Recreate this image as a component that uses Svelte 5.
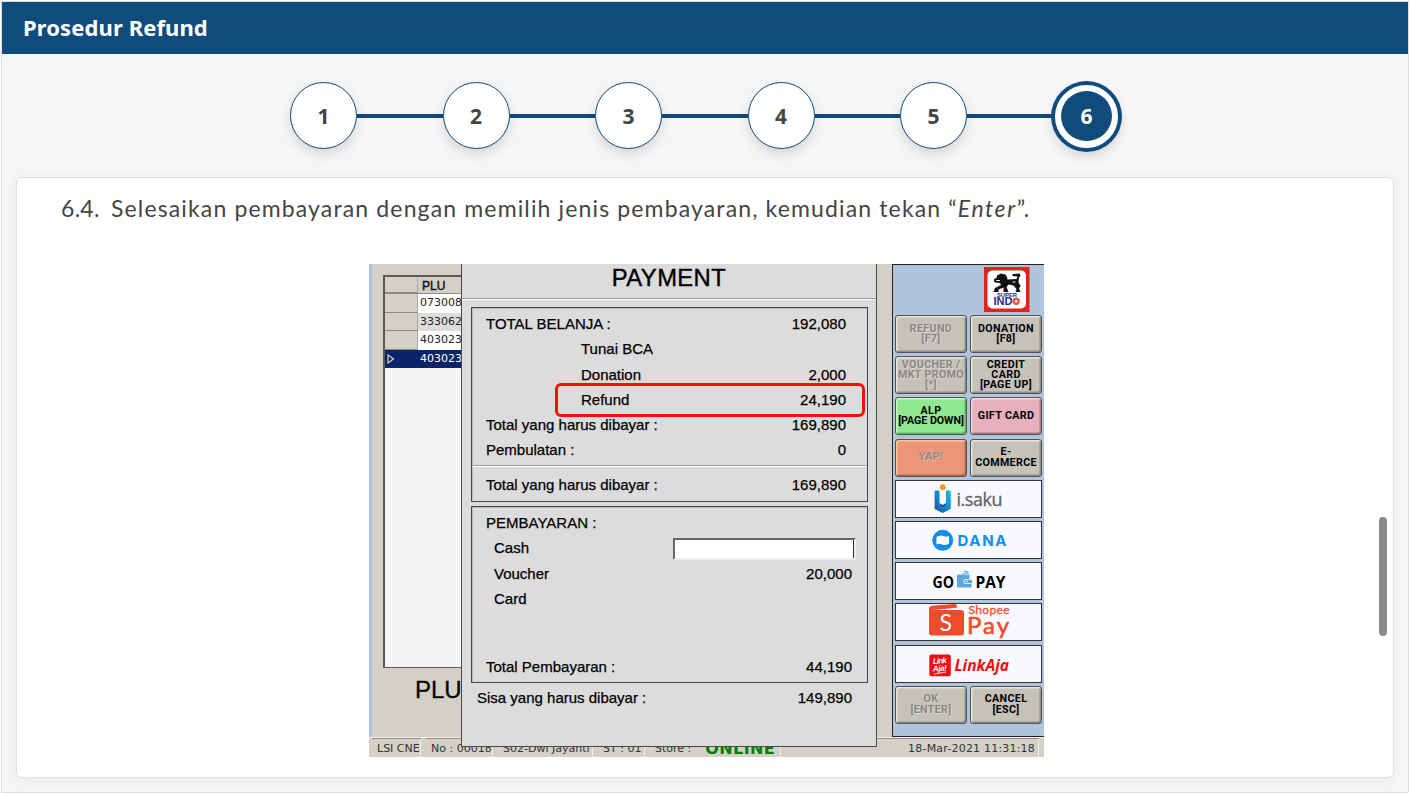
<script>
  const steps = [1, 2, 3, 4, 5, 6];
  const active = 6;

  const plu = ['073008', '333062', '403023', '403023'];

  const totals = [
    { label: 'TOTAL BELANJA :', value: '192,080' },
    { label: 'Tunai BCA', value: '', indent: true },
    { label: 'Donation', value: '2,000', indent: true },
    { label: 'Refund', value: '24,190', indent: true, marked: true },
    { label: 'Total yang harus dibayar :', value: '169,890' },
    { label: 'Pembulatan :', value: '0' }
  ];

  const keys = [
    { lines: ['REFUND', '[F7]'], off: true },
    { lines: ['DONATION', '[F8]'] },
    { lines: ['VOUCHER /', 'MKT PROMO', '[*]'], off: true },
    { lines: ['CREDIT', 'CARD', '[PAGE UP]'] },
    { lines: ['ALP', '[PAGE DOWN]'], tone: 'green' },
    { lines: ['GIFT CARD'], tone: 'pink' },
    { lines: ['YAP!'], tone: 'orange', off: true },
    { lines: ['E-', 'COMMERCE'] }
  ];
  const endKeys = [
    { lines: ['OK', '[ENTER]'], off: true },
    { lines: ['CANCEL', '[ESC]'] }
  ];
</script>

{#snippet key(k)}
  <div class="key {k.tone ?? ''}" class:off={k.off}>
    {#each k.lines as line}<span class:tight={line.length > 10}>{line}</span>{/each}
  </div>
{/snippet}

<div class="page">
  <header>Prosedur Refund</header>

  <nav>
    {#each steps as n}
      {#if n > 1}<i class="link"></i>{/if}
      <div class="step" class:active={n === active}><span>{n}</span></div>
    {/each}
  </nav>

  <main>
    <p><span class="num">6.4.</span><span>Selesaikan pembayaran dengan memilih jenis pembayaran, kemudian tekan “<em>Enter</em>”.</span></p>

    <div class="pos">
      <div class="work">
        <div class="left">
          <div class="grid">
            <div class="row head"><b></b><span>PLU</span></div>
            {#each plu as code, i}
              <div class="row" class:alt={i === 1} class:sel={i === 3}>
                <b>{#if i === 3}<svg width="8" height="10" viewBox="0 0 8 10"><path d="M1 1L6.5 5L1 9Z" fill="#0a246a" stroke="#d8d8b8" stroke-width="1.2" /></svg>{/if}</b>
                <span>{code}</span>
              </div>
            {/each}
          </div>
          <div class="bigplu">PLU</div>
        </div>

        <aside>
          <svg class="brand" width="46" height="45" viewBox="0 0 46 45">
            <rect width="45.500" height="45" fill="#e2231a" />
            <rect x="3.5" y="3.5" width="38.500" height="38" rx="5" fill="#fff" />
            <path d="M10 12L12.500 11L13 8.500L17 6.500L21.500 7.500L23 10L23.500 12.500L32.500 12L33.500 9.500L28.500 9L28.500 7L36 6.500L36.500 9L35 10.500L34.500 15.500L36.500 19L35 21.500L36.500 25H31.500L32.500 22L29.500 18.500L24.500 17.500L22.500 20L24.500 25H19.500L19.500 20.500L14.500 22.500L14.500 25H9.500L11 21L17 18L16 16L11 15.500L10 14Z" fill="#111" />
            <path d="M12 13.500L16 13.500M28.500 15L31.500 15" stroke="#fff" stroke-width=".9" fill="none" />
            <text x="13" y="29.900" textLength="20" lengthAdjust="spacingAndGlyphs" font-size="6.200" font-weight="700" fill="#222a80">SUPER</text>
            <text x="9.500" y="38" textLength="19" lengthAdjust="spacingAndGlyphs" font-size="10.500" font-weight="700" fill="#222a80">IND</text>
            <circle cx="32.200" cy="34.300" r="2.500" fill="#fff" stroke="#e8583a" stroke-width="2.400" />
          </svg>

          <div class="keys">
            {#each keys as k}{@render key(k)}{/each}

            <div class="pay">
              <svg viewBox="0 0 145 36">
                <defs><linearGradient id="saku" x1="0" x2="1" y1="1" y2="0"><stop offset="0" stop-color="#1554a5" /><stop offset=".55" stop-color="#168fd0" /><stop offset="1" stop-color="#15c4d8" /></linearGradient></defs>
                <path d="M38.600 10.500Q38.600 9.500 40 9.500H43.500V25L46.700 27L50 25V9.500H53.500Q54.800 9.500 54.800 10.500V28L46.700 32L38.600 28Z" fill="url(#saku)" />
                <path d="M43.500 25L46.700 27L50 25V22L46.700 24L43.500 22Z" fill="#1554a5" />
                <circle cx="46.800" cy="6.200" r="2.900" fill="#f59a23" />
                <text x="60.500" y="24.500" textLength="46" font-size="18" fill="#626366" stroke="#626366" stroke-width=".3" class="open">i.saku</text>
              </svg>
            </div>
            <div class="pay">
              <svg viewBox="0 0 145 36">
                <circle cx="46.700" cy="18.300" r="10.500" fill="#118ee9" />
                <path d="M40.500 15Q44 12.500 47.500 14T53 14V21.500Q49 24 46 22.500T40.500 22.500Z" fill="#fff" />
                <text x="61.500" y="24" textLength="49" font-size="15" font-weight="700" fill="#118ee9" class="round">DANA</text>
              </svg>
            </div>
            <div class="pay">
              <svg viewBox="0 0 145 36">
                <text x="36.500" y="24.700" textLength="21.500" lengthAdjust="spacingAndGlyphs" font-size="16.500" font-weight="700" class="open">GO</text>
                <path d="M61 12.500Q61 11.500 62.500 11.500H73.500V16H70Q67.500 16 67.500 18.500T70 21H75.500V24.500H62.500Q61 24.500 61 23Z" fill="#5ba7de" />
                <path d="M70 16.700H76V20.300H70Q68.500 20.300 68.500 18.500T70 16.700Z" fill="#5ba7de" />
                <circle cx="71" cy="18.500" r=".8" fill="#fff" />
                <path d="M66.500 10.500L72.500 10M68 8.500Q70.500 7.500 72.500 10" stroke="#5ba7de" stroke-width="1.100" fill="none" />
                <text x="79.500" y="24.700" textLength="30" lengthAdjust="spacingAndGlyphs" font-size="16.500" font-weight="700" class="open">PAY</text>
              </svg>
            </div>
            <div class="pay">
              <svg viewBox="0 0 145 36">
                <path d="M33 4.500Q33 2.300 36 1.700L58 0Q61 -.2 61 2V6H64.500Q68 6 68 9V28.500Q68 31.500 65 31.500H36Q33 31.500 33 28.500Z" fill="#ee4d2d" />
                <path d="M36.500 6L61 3.700V6Z" fill="#f8f8ff" />
                <text x="43.500" y="27" font-size="23" fill="#fff" class="lato">S</text>
                <text x="72.500" y="9.800" textLength="41" font-size="12" fill="#ee4d2d" stroke="#ee4d2d" stroke-width=".3" class="lato">Shopee</text>
                <text x="71" y="29.700" textLength="42" font-size="24" fill="#ee4d2d" stroke="#ee4d2d" stroke-width=".6" class="lato">Pay</text>
              </svg>
            </div>
            <div class="pay">
              <svg viewBox="0 0 145 36">
                <rect x="33.300" y="8.500" width="21.500" height="21.700" rx="2" fill="#f20d12" />
                <text x="37" y="17.500" textLength="14" font-size="8" font-style="italic" font-weight="700" fill="#fff" transform="rotate(-4 44 18)">Link</text>
                <text x="37" y="25" textLength="14" font-size="8" font-style="italic" font-weight="700" fill="#fff" transform="rotate(-4 44 25)">Aja!</text>
                <path d="M38 28.200L50 26" stroke="#fff" stroke-width=".8" />
                <text x="58.500" y="24.500" textLength="54.500" lengthAdjust="spacingAndGlyphs" font-size="15.500" font-style="italic" font-weight="700" fill="#f20d12" class="open">LinkAja</text>
              </svg>
            </div>

            {#each endKeys as k}{@render key(k)}{/each}
          </div>
        </aside>
      </div>

      <footer>
        <span style:width="49px">LSI CNE</span>
        <span style:width="67px">No : 00018</span>
        <span style:width="95px">S02-Dwi Jayanti</span>
        <span style:width="47px">ST : 01</span>
        <span class="store">Store : <b>ONLINE</b></span>
        <span class="clock">18-Mar-2021 11:31:18</span>
      </footer>

      <div class="dialog">
        <h1>PAYMENT</h1>
        <hr />
        <section class="sum">
          {#each totals as t}
            <div class="line" class:indent={t.indent}>
              <span>{t.label}</span><span>{t.value}</span>
              {#if t.marked}<i class="mark"></i>{/if}
            </div>
          {/each}
          <hr />
          <div class="line last"><span>Total yang harus dibayar :</span><span>169,890</span></div>
        </section>
        <section class="paid">
          <div class="line"><span>PEMBAYARAN :</span></div>
          <div class="line sub"><span>Cash</span><i class="field"></i></div>
          <div class="line sub"><span>Voucher</span><span>20,000</span></div>
          <div class="line sub"><span>Card</span></div>
          <div class="line total"><span>Total Pembayaran :</span><span>44,190</span></div>
        </section>
        <div class="line rest"><span>Sisa yang harus dibayar :</span><span>149,890</span></div>
      </div>
    </div>

    <i class="thumb"></i>
  </main>
</div>

<style>
  :global(body) { background: #fff; }
  * { box-sizing: border-box; }
  .page {
    width: 1410px; height: 794px; overflow: hidden;
    border: 1px solid #fff; outline: 1px solid #dcdfe2; outline-offset: -2px;
    padding: 1px; background: #f6f6f6;
    display: flex; flex-direction: column;
  }
  header {
    flex: none; height: 52px; padding-left: 21px; margin: 0;
    background: #104b7d; color: #fff;
    font: 700 22px/50px "Noto Sans", sans-serif; letter-spacing: .1px;
  }
  nav { flex: none; height: 123px; padding: 28px 0 0 288px; display: flex; align-items: flex-start; }
  .step {
    flex: none; width: 67px; height: 67px; border: 1.5px solid #104b7d; border-radius: 50%;
    background: #fff; box-shadow: 0 5px 12px rgba(0, 0, 0, .13);
    display: grid; place-items: center; position: relative;
    font: 700 21px/1 "Noto Sans", sans-serif; color: #444;
  }
  .step span { padding-top: 2px; }
  .link { flex: none; width: 85.500px; height: 4px; margin-top: 32px; background: #104b7d; }
  .step.active { margin: 1px 0 0 .5px; border-width: 2px; box-shadow: 0 0 0 2px #104b7d, 0 6px 12px rgba(0, 0, 0, .15); color: #fff; }
  .step.active span { width: 51px; height: 50px; border-radius: 50%; background: #104b7d; display: grid; place-items: center; margin-top: -2px; }

  main {
    position: relative; width: 1378px; height: 601px; margin-left: 14px; flex: none;
    background: #fff; border: 1px solid #dedfe0; border-radius: 6px;
    box-shadow: 0 2px 14px rgba(0, 0, 0, .06);
  }
  p {
    margin: 0; padding: 14px 0 0 44px; height: 86px; display: flex;
    font: 23px/32px Lato, sans-serif; color: #444; letter-spacing: 1.140px; white-space: nowrap;
  }
  p em { letter-spacing: 1.600px; }
  .num { width: 50px; letter-spacing: .3px; }
  .thumb { position: absolute; left: 1362px; top: 339px; width: 8px; height: 119px; border-radius: 4px; background: #8b8b8b; }

  .pos {
    position: relative; width: 675px; height: 493px; margin-left: 352px; overflow: hidden;
    font-family: "Liberation Sans", sans-serif; color: #000; background: #d4d0c8;
    display: flex; flex-direction: column;
  }
  .work { height: 473px; display: flex; border-left: 3px solid #a9c6e8; }
  .left { width: 520px; padding: 11px 0 0 11px; }
  .grid { width: 300px; height: 393px; border: 2px solid #5c5a58; border-bottom-width: 1px; background: #f5f5f5; }
  .row { display: flex; height: 18.500px; background: #fff; font: 11px/17px "DejaVu Sans", sans-serif; color: #222; }
  .row b { width: 33px; background: #d4d0c8; border-bottom: 1px solid #8c8a86; border-right: 1px solid #aaa; padding-left: 2px; }
  .row span { padding-left: 2px; }
  .row.head { height: 17px; background: #d4d0c8; font: 12px/18px "Liberation Sans", sans-serif; -webkit-text-stroke: .4px #000; border-bottom: 1px solid #8c8a86; }
  .row.head span { padding-left: 4px; }
  .row.alt { background: #dcdcdc; }
  .row.sel, .row.sel b { background: #0a246a; color: #fff; border-color: #0a246a; }
  .row svg { display: block; margin-top: 4px; }
  .bigplu { margin: 9px 0 0 32px; font-size: 24px; line-height: 26px; -webkit-text-stroke: .3px #000; }

  aside { flex: 1; background: #b0c4de; border: solid #222; border-width: 1px 0 1px 1px; padding: 2px 2px 0; }
  .brand { display: block; margin: 0 0 3px 88.500px; }
  .keys { display: grid; grid-template-columns: 72px 72px; gap: 3.200px 3px; grid-auto-rows: 38px; }
  .key {
    border: 1px solid #55534f; border-radius: 3px; background: #c5c2ba;
    box-shadow: inset 1.500px 1.500px 0 #e6e4df, inset -1.500px -1.500px 0 #8f8c86;
    display: flex; flex-direction: column; justify-content: center; align-items: center;
    font: 700 10.700px/10.300px Roboto, sans-serif; letter-spacing: .35px; white-space: nowrap;
  }
  .key .tight { letter-spacing: -.05px; }
  .key.green { background: #90e890; box-shadow: inset 1.500px 1.500px 0 #c4f7c4, inset -1.500px -1.500px 0 #5cb45c; }
  .key.pink { background: #e6b0be; box-shadow: inset 1.500px 1.500px 0 #f8d4dd, inset -1.500px -1.500px 0 #ac7684; }
  .key.orange { background: #e9967a; box-shadow: inset 1.500px 1.500px 0 #ffc09c, inset -1.500px -1.500px 0 #b8643f; }
  .key.off { color: #8b8883; text-shadow: 1px 1px 0 rgba(255, 255, 255, .35); }
  .pay { grid-column: 1 / 3; border: 1.500px solid #333; background: #f8f8ff; }
  .pay svg { display: block; width: 145px; height: 36px; overflow: visible; }
  .open { font-family: "Open Sans", sans-serif; }
  .round { font-family: Inter, sans-serif; }
  .lato { font-family: Lato, sans-serif; }

  footer {
    height: 20px; border-top: 1px solid #f2f0ec; padding: 1px 5px 0 3px; display: flex; gap: 5px;
    font: 11px/19px "DejaVu Sans", sans-serif; color: #333; white-space: nowrap;
  }
  footer span { border: solid #f2f0ec; border-width: 0 1px 0 0; padding-left: 5px; box-shadow: 0 -1px 0 #908d87; }
  .store { width: 131px; display: flex; gap: 14px; }
  .store b { color: #008000; font: 700 16px/20px "DejaVu Sans", sans-serif; letter-spacing: .4px; }
  .clock { flex: 1; text-align: right; padding-right: 3px; letter-spacing: .2px; }

  .dialog {
    position: absolute; left: 92px; top: 0; width: 416px; height: 483px;
    background: #dcdcdc; border: solid #4a4a4a; border-width: 0 1.500px 1.500px 1px;
    font-size: 15px; line-height: 24px; -webkit-text-stroke: .25px #000;
  }
  h1 { margin: 0; height: 34px; text-align: center; font-size: 23.800px; line-height: 27px; font-weight: 400; letter-spacing: .4px; -webkit-text-stroke: .4px #000; }
  hr { margin: 0; height: 2px; border: 0; background: #fff; border-top: 1px solid #999; }
  section { margin: 7px 8px 0 9px; border: 1.500px solid #444; position: relative; box-shadow: inset 1px 1px 0 #bbb; }
  .line { display: flex; justify-content: space-between; padding: 0 21px 0 14px; height: 25.300px; white-space: nowrap; position: relative; }
  .indent { padding-left: 109px; }
  .sum { height: 195px; padding-top: 4px; }
  .sum hr { margin-top: 1px; }
  .sum .last { margin-top: 6px; }
  .mark { position: absolute; left: 83px; top: -5px; width: 310px; height: 34px; border: 3px solid #f80c0c; border-radius: 6px; }
  .paid { height: 177px; margin-top: 4px; padding-top: 4px; }
  .paid .line { padding-right: 15px; }
  .paid .sub { padding-left: 22px; }
  .paid .total { margin-top: 42.500px; }
  .field { width: 183px; height: 22px; margin: 2px -4px 0 0; background: #fff; border: 2px solid #666; border-bottom: 2px solid #eee; border-right: 2px solid #eee; box-shadow: inset -1px 0 0 #333; }
  .rest { margin-top: 3px; padding: 0 24px 0 15px; }
</style>
